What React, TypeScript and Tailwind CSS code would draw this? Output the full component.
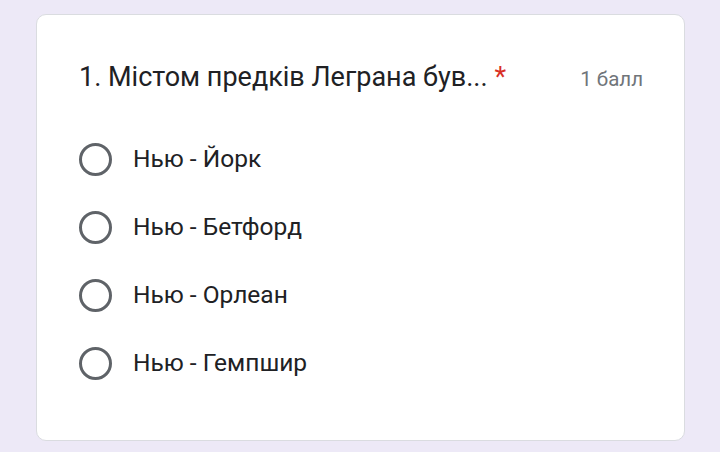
import { useState } from "react";

const OPTIONS = ["Нью - Йорк", "Нью - Бетфорд", "Нью - Орлеан", "Нью - Гемпшир"];

function Radio({ checked }: { checked: boolean }) {
  return (
    <span className="w-[33px] h-[33px] rounded-full border-[3px] border-[#5f6368] flex items-center justify-center shrink-0">
      {checked && <span className="w-[15px] h-[15px] rounded-full bg-[#673ab7]" />}
    </span>
  );
}

export default function App() {
  const [picked, setPicked] = useState<number | null>(null);

  return (
    <div className="w-[720px] h-[452px] bg-[#ede9f7] pt-[14px] pl-[36px] font-['Roboto',sans-serif]">
      <div className="w-[649px] h-[427px] bg-white rounded-[10px] border border-[#dadce0] pl-[42px] pr-[41px] pt-[44px]">
        <div className="flex items-baseline justify-between">
          <h2 className="text-[27px] leading-[36px] text-[#202124]">
            1. Містом предків Леграна був...
            <span className="text-[#d93025] ml-[7px]">*</span>
          </h2>
          <span className="text-[20.5px] text-[#70757a]">1 балл</span>
        </div>
        <div className="mt-[48px] flex flex-col gap-[35px]">
          {OPTIONS.map((o, i) => (
            <label
              key={o}
              onClick={() => setPicked(i)}
              className="flex items-center gap-[21px] h-[33px] cursor-pointer"
            >
              <Radio checked={picked === i} />
              <span className="text-[24.5px] text-[#202124]">{o}</span>
            </label>
          ))}
        </div>
      </div>
    </div>
  );
}
